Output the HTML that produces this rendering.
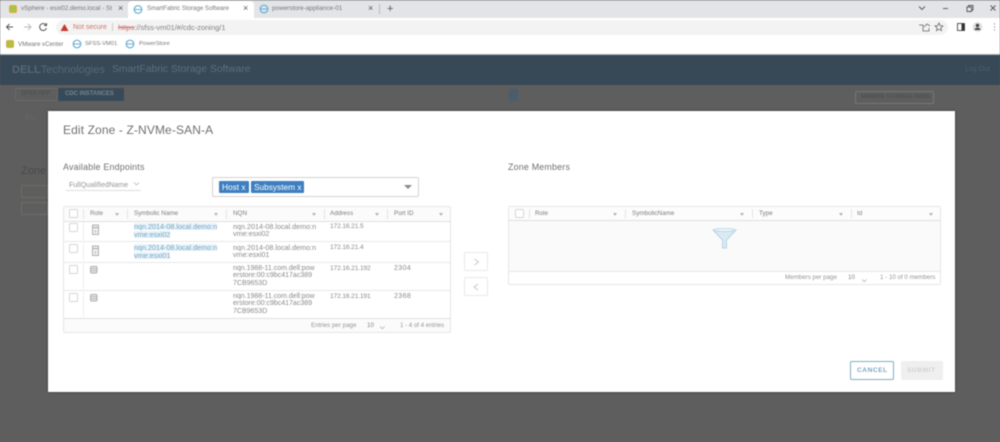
<!DOCTYPE html>
<html><head><meta charset="utf-8">
<style>
*{box-sizing:border-box}
html,body{margin:0;padding:0;width:1000px;height:442px;overflow:hidden;background:#5e5e5e;font-family:"Liberation Sans",sans-serif}
#w{position:relative;width:1000px;height:442px;overflow:hidden;background:#5e5e5e;filter:blur(.4px)}
.a{position:absolute}
.t{position:absolute;white-space:nowrap;color:#8a8a8a;font-size:7px;line-height:7.4px}
.h{position:absolute;white-space:nowrap;color:#7c7c7c;font-size:6.3px;line-height:8px;top:210px}
.cb{position:absolute;width:9px;height:9px;border:1px solid #d6d6d6;border-radius:1.5px;background:#fff}
.sep{position:absolute;width:1px;background:#e4e4e4}
.line{position:absolute;height:1px;background:#e8e8e8}
.flt{position:absolute;width:0;height:0;border-left:2.5px solid transparent;border-right:2.5px solid transparent;border-top:3px solid #b5b5b5;top:213px}
.lnk{position:absolute;white-space:nowrap;color:#6fa5c4;font-size:7.2px;line-height:7.4px;background:#eaf3f9}
.tag{position:absolute;top:181px;height:12px;background:#3d7fc0;color:#fff;font-size:8.3px;line-height:12px;padding-left:3px;border-radius:1px}
.ico{position:absolute}
</style></head><body><div id="w">
<!-- browser chrome -->
<div class="a" style="left:0;top:0;width:1000px;height:18px;background:#e3e4e7;border-top:1px solid #c6c7ca"></div>
<div class="a" style="left:128px;top:1px;width:126px;height:17px;background:#fff;border-radius:4px 4px 0 0"></div>
<div class="a" style="left:9px;top:5px;width:8px;height:8px;background:#a6c445;border:1.5px solid #e5a93d;border-radius:2px"></div>
<div class="t" style="left:21px;top:5px;font-size:6.3px;color:#777;width:91px;overflow:hidden">vSphere - esxi02.demo.local - Storage</div>
<div class="t" style="left:118px;top:5px;font-size:9px;color:#555">×</div>
<svg class="ico" style="left:133px;top:5px" width="10" height="9"><circle cx="5" cy="4.5" r="3.8" fill="#fff" stroke="#69aed2" stroke-width="1.2"/><path d="M1.5 4.5h7" stroke="#69aed2"/></svg>
<div class="t" style="left:147px;top:5px;font-size:6.1px;color:#777">SmartFabric Storage Software</div>
<div class="t" style="left:243px;top:5px;font-size:9px;color:#555">×</div>
<svg class="ico" style="left:259px;top:4px" width="10" height="10"><circle cx="5" cy="5" r="3.8" fill="#dbe6ee" stroke="#69aed2" stroke-width="1.2"/><path d="M1.5 5h7" stroke="#69aed2"/></svg>
<div class="t" style="left:272px;top:5px;font-size:6.4px;color:#777">powerstore-appliance-01</div>
<div class="t" style="left:368px;top:5px;font-size:9px;color:#555">×</div>
<div class="a" style="left:379px;top:4px;width:1px;height:10px;background:#bbb"></div>
<div class="t" style="left:387px;top:3px;font-size:11px;line-height:12px;color:#555">+</div>
<svg class="ico" style="left:915px;top:2px" width="85" height="14" fill="none" stroke="#555" stroke-width=".9"><path d="M4 4.500l3 3 3-3"/><path d="M28 6.500h5"/><path d="M52 5h4.500v4.500h-4.500zM53.500 5v-1.500h4.500v4.500h-1.500"/><path d="M75.500 3.500l5 5M80.500 3.500l-5 5"/></svg>
<div class="a" style="left:0;top:18px;width:1000px;height:17px;background:#fff"></div>
<div class="a" style="left:56px;top:20px;width:892px;height:15px;background:#f3f3f4;border-radius:7.5px"></div>
<svg class="ico" style="left:4px;top:20px" width="52" height="14" fill="none" stroke-width="1"><path d="M9 7H2.500M5.500 4L2.500 7l3 3" stroke="#555"/><path d="M20 7h7M24 4l3 3-3 3" stroke="#bbb"/><path d="M42 5a3.500 3.500 0 1 0 .5 3" stroke="#555"/><path d="M42.500 3v2.500H40" stroke="#555"/></svg>
<svg class="ico" style="left:60px;top:23px" width="9" height="9"><path d="M4.500 1L8.500 8H.5z" fill="#c5372c"/></svg>
<div class="t" style="left:73px;top:24px;font-size:7px;color:#c87a6a">Not secure</div>
<div class="a" style="left:112px;top:23px;width:1px;height:8px;background:#ccc"></div>
<div class="t" style="left:118px;top:24px;font-size:7.5px;color:#808080"><span style="color:#d07a70;text-decoration:line-through">https</span>://sfss-vm01/#/cdc-zoning/1</div>
<svg class="ico" style="left:914px;top:20px" width="86" height="14" fill="none" stroke="#666" stroke-width=".8"><path d="M5 5h4v6h6V8M10 7l3-3 3 2"/><path d="M25 3l1.200 2.600 2.800.3-2.100 1.900.6 2.800-2.500-1.400-2.500 1.400.6-2.800-2.100-1.900 2.800-.3z"/><rect x="43.500" y="3.500" width="7" height="7" stroke="#333"/><rect x="47.500" y="3.500" width="3" height="7" fill="#333" stroke="none"/><circle cx="63.500" cy="7" r="5" fill="#e0e1e3" stroke="none"/><circle cx="63.500" cy="5.500" r="1.700" fill="#444" stroke="none"/><path d="M60.500 10c0-3 6-3 6 0z" fill="#444" stroke="none"/><path d="M80.500 3.500v.8M80.500 6.500v.8M80.500 9.500v.8" stroke="#444" stroke-width="1"/></svg>
<div class="a" style="left:0;top:35px;width:1000px;height:19px;background:#fff"></div>
<div class="a" style="left:6px;top:40px;width:8px;height:8px;background:#a6c445;border:1.5px solid #e5a93d;border-radius:2px"></div>
<div class="t" style="left:18px;top:41px;font-size:6.1px;color:#777">VMware vCenter</div>
<svg class="ico" style="left:72px;top:39px" width="10" height="10"><circle cx="5" cy="5" r="3.800" fill="#fff" stroke="#69aed2" stroke-width="1.200"/><path d="M1.500 5h7" stroke="#69aed2"/></svg>
<div class="t" style="left:85px;top:41px;font-size:5.8px;color:#777">SFSS-VM01</div>
<svg class="ico" style="left:125px;top:39px" width="10" height="10"><circle cx="5" cy="5" r="3.800" fill="#fff" stroke="#69aed2" stroke-width="1.200"/><path d="M1.500 5h7" stroke="#69aed2"/></svg>
<div class="t" style="left:139px;top:41px;font-size:5.9px;color:#777">PowerStore</div>
<!-- dimmed app -->
<div class="a" style="left:0;top:54px;width:1000px;height:31px;background:#374856;border-top:1px solid #aab0b5"></div>
<div class="t" style="left:12px;top:64px;font-size:11px;line-height:12px;color:#586773;font-weight:bold">DELL<span style="font-weight:normal">Technologies</span></div>
<div class="t" style="left:112px;top:64px;font-size:10.3px;line-height:11px;color:#5f6e79">SmartFabric Storage Software</div>
<div class="t" style="left:965px;top:66px;font-size:7px;color:#4d5e6b">Log Out</div>
<div class="a" style="left:15px;top:88px;width:43px;height:13px;border:1px solid #6a6a6a;border-radius:2px"></div>
<div class="t" style="left:21px;top:91px;font-size:6px;color:#4a4a4a">SFSS APP</div>
<div class="a" style="left:58px;top:88px;width:66px;height:13px;background:#384a58"></div>
<div class="t" style="left:65px;top:91px;font-size:6px;font-weight:bold;color:#73828e">CDC INSTANCES</div>
<div class="a" style="left:509px;top:89px;width:9px;height:12px;background:#4c5d6a"></div>
<div class="a" style="left:855px;top:91px;width:79px;height:13px;border:1px solid #767676;border-radius:2px"></div>
<div class="t" style="left:861px;top:94px;font-size:5.500px;color:#4a4a4a">MANAGE STORAGE NODE</div>
<div class="t" style="left:25px;top:113px;font-size:8px;line-height:9px;color:#686868">En</div>
<div class="t" style="left:21px;top:165px;font-size:11px;line-height:13px;color:#4a4a4a">Zone</div>
<div class="a" style="left:21px;top:185px;width:27px;height:13px;border:1px solid #6c6c5a"></div>
<div class="a" style="left:21px;top:202px;width:27px;height:13px;border:1px solid #6c6c6c"></div>
<!-- modal -->
<div class="a" style="left:48px;top:111px;width:907px;height:281px;background:#fff;box-shadow:0 0 2px #333"></div>
<div class="t" style="left:63px;top:123px;font-size:12px;line-height:15px;color:#707070;letter-spacing:.12px">Edit Zone - Z-NVMe-SAN-A</div>
<div class="t" style="left:63px;top:162px;font-size:8.900px;line-height:10px;color:#707070;letter-spacing:.2px">Available Endpoints</div>
<div class="t" style="left:508px;top:162px;font-size:8.900px;line-height:10px;color:#707070;letter-spacing:.2px">Zone Members</div>
<div class="t" style="left:69px;top:181px;font-size:7.2px;line-height:8px;color:#959595">FullQualifiedName</div>
<svg class="ico" style="left:133px;top:181px" width="8" height="6" fill="none" stroke="#bbb" stroke-width=".8"><path d="M1 1.500l2.500 2.500 2.500-2.500"/></svg>
<div class="line" style="left:66px;top:190px;width:75px;background:#ddd"></div>
<div class="a" style="left:212px;top:177px;width:207px;height:20px;background:#fff;border:1px solid #d2d2d2;border-radius:2px"></div>
<div class="tag" style="left:219px;width:30px">Host x</div>
<div class="tag" style="left:251px;width:53px">Subsystem x</div>
<div class="a" style="left:404px;top:185px;width:0;height:0;border-left:4px solid transparent;border-right:4px solid transparent;border-top:4px solid #888"></div>

<!-- left table -->
<div class="a" style="left:63px;top:206px;width:388px;height:127px;border:1px solid #e6e6e6;border-radius:2px;background:#fff"></div>
<div class="a" style="left:64px;top:207px;width:386px;height:14px;background:#fbfbfb"></div>
<div class="a" style="left:64px;top:319px;width:386px;height:13px;background:#fbfbfb"></div>
<div class="line" style="left:63px;top:221px;width:388px;background:#e0e0e0"></div>
<div class="line" style="left:63px;top:241px;width:388px"></div>
<div class="line" style="left:63px;top:262px;width:388px"></div>
<div class="line" style="left:63px;top:290px;width:388px"></div>
<div class="line" style="left:63px;top:318px;width:388px;background:#e0e0e0"></div>
<div class="sep" style="left:83px;top:209px;height:10px"></div>
<div class="sep" style="left:127px;top:209px;height:10px"></div>
<div class="sep" style="left:226px;top:209px;height:10px"></div>
<div class="sep" style="left:324px;top:209px;height:10px"></div>
<div class="sep" style="left:387px;top:209px;height:10px"></div>
<div class="sep" style="left:83px;top:222px;height:18px;background:#eee"></div>
<div class="sep" style="left:83px;top:243px;height:18px;background:#eee"></div>
<div class="sep" style="left:83px;top:264px;height:25px;background:#eee"></div>
<div class="sep" style="left:83px;top:292px;height:25px;background:#eee"></div>
<div class="cb" style="left:69px;top:209px"></div>
<div class="cb" style="left:69px;top:223px"></div>
<div class="cb" style="left:69px;top:244px"></div>
<div class="cb" style="left:69px;top:265px"></div>
<div class="cb" style="left:69px;top:293px"></div>
<div class="h" style="left:90px">Role</div><div class="flt" style="left:115px"></div>
<div class="h" style="left:134px">Symbolic Name</div><div class="flt" style="left:214px"></div>
<div class="h" style="left:233px">NQN</div><div class="flt" style="left:312px"></div>
<div class="h" style="left:330px">Address</div><div class="flt" style="left:375px"></div>
<div class="h" style="left:394px">Port ID</div><div class="flt" style="left:439px"></div>
<svg class="ico" style="left:91px;top:224px" width="10" height="12" fill="none" stroke="#aaa" stroke-width=".9"><rect x="1.500" y="1" width="6" height="9.500" fill="#eee"/><path d="M1.500 3.500h6M4.500 6.500v2"/></svg>
<svg class="ico" style="left:91px;top:245px" width="10" height="12" fill="none" stroke="#aaa" stroke-width=".9"><rect x="1.500" y="1" width="6" height="9.500" fill="#eee"/><path d="M1.500 3.500h6M4.500 6.500v2"/></svg>
<svg class="ico" style="left:89px;top:265px" width="11" height="10" fill="none" stroke="#aaa" stroke-width=".9"><rect x="1.500" y="1.500" width="6.500" height="6.500" rx="1" fill="#eee"/><path d="M1.500 3.700h6.500M1.500 5.800h6.500"/></svg>
<svg class="ico" style="left:89px;top:293px" width="11" height="10" fill="none" stroke="#aaa" stroke-width=".9"><rect x="1.500" y="1.500" width="6.500" height="6.500" rx="1" fill="#eee"/><path d="M1.500 3.700h6.500M1.500 5.800h6.500"/></svg>
<div class="lnk" style="left:134px;top:223px">nqn.2014-08.local.demo:n</div>
<div class="lnk" style="left:134px;top:231px">vme:esxi02</div>
<div class="lnk" style="left:134px;top:244px">nqn.2014-08.local.demo:n</div>
<div class="lnk" style="left:134px;top:252px">vme:esxi01</div>
<div class="t" style="left:233px;top:223px;font-size:7.2px">nqn.2014-08.local.demo:n<br>vme:esxi02</div>
<div class="t" style="left:233px;top:244px;font-size:7.2px">nqn.2014-08.local.demo:n<br>vme:esxi01</div>
<div class="t" style="left:233px;top:265px">nqn.1988-11.com.dell:pow<br>erstore:00:c9bc417ac389<br>7CB9653D</div>
<div class="t" style="left:233px;top:293px">nqn.1988-11.com.dell:pow<br>erstore:00:c9bc417ac389<br>7CB9653D</div>
<div class="t" style="left:330px;top:223px;font-size:6.6px;letter-spacing:-.12px">172.16.21.5</div>
<div class="t" style="left:330px;top:244px;font-size:6.6px;letter-spacing:-.12px">172.16.21.4</div>
<div class="t" style="left:330px;top:265px;font-size:6.6px;letter-spacing:-.12px">172.16.21.192</div>
<div class="t" style="left:330px;top:293px;font-size:6.6px;letter-spacing:-.12px">172.16.21.191</div>
<div class="t" style="left:394px;top:265px;letter-spacing:.4px">2304</div>
<div class="t" style="left:394px;top:293px;letter-spacing:.4px">2368</div>
<div class="t" style="left:311px;top:322px;font-size:6.2px;color:#959595">Entries per page</div>
<div class="t" style="left:367px;top:322px;font-size:6.2px;color:#808080">10</div>
<svg class="ico" style="left:379px;top:326px" width="7" height="4" fill="none" stroke="#aaa" stroke-width=".7"><path d="M1 .5l2.300 2.300 2.300-2.300"/></svg>
<div class="t" style="left:400px;top:322px;font-size:6.1px;color:#959595">1 - 4 of 4 entries</div>

<!-- arrow buttons -->
<div class="a" style="left:464px;top:252px;width:24px;height:19px;border:1px solid #e8e8e8;border-radius:2px"></div>
<div class="a" style="left:464px;top:277px;width:24px;height:19px;border:1px solid #e8e8e8;border-radius:2px"></div>
<svg class="ico" style="left:464px;top:252px" width="24" height="44" fill="none" stroke="#c4c4c4" stroke-width=".9"><path d="M10.500 7l4 3-4 3"/><path d="M14 32l-4 3 4 3"/></svg>

<!-- right table -->
<div class="a" style="left:508px;top:206px;width:433px;height:79px;border:1px solid #e6e6e6;border-radius:2px;background:#fff"></div>
<div class="a" style="left:509px;top:207px;width:431px;height:13px;background:#fcfcfc"></div>
<div class="a" style="left:509px;top:221px;width:431px;height:50px;background:#fafafa"></div>
<div class="line" style="left:508px;top:220px;width:433px;background:#e0e0e0"></div>
<div class="line" style="left:508px;top:271px;width:433px"></div>
<div class="cb" style="left:515px;top:209px;width:8.500px;height:8.500px"></div>
<div class="sep" style="left:529px;top:209px;height:9px"></div>
<div class="sep" style="left:625px;top:209px;height:9px"></div>
<div class="sep" style="left:752px;top:209px;height:9px"></div>
<div class="sep" style="left:851px;top:209px;height:9px"></div>
<div class="h" style="left:535px">Role</div><div class="flt" style="left:613px"></div>
<div class="h" style="left:632px">SymbolicName</div><div class="flt" style="left:740px"></div>
<div class="h" style="left:759px">Type</div><div class="flt" style="left:839px"></div>
<div class="h" style="left:857px">Id</div><div class="flt" style="left:929px"></div>
<svg class="ico" style="left:711px;top:227px" width="28" height="24"><path d="M2 3h23L15.500 13v8h-4v-8z" fill="#dbeaf2" stroke="#b4d6e6" stroke-width="1"/><ellipse cx="13.500" cy="3" rx="11" ry="1.500" fill="#eef6fa" stroke="#b4d6e6" stroke-width=".8"/></svg>
<div class="t" style="left:785px;top:274px;font-size:6.2px;color:#959595">Members per page</div>
<div class="t" style="left:848px;top:274px;font-size:6.2px;color:#808080">10</div>
<svg class="ico" style="left:861px;top:279px" width="7" height="4" fill="none" stroke="#aaa" stroke-width=".7"><path d="M1 .5l2.300 2.300 2.300-2.300"/></svg>
<div class="t" style="left:880px;top:274px;font-size:6.2px;color:#959595">1 - 10 of 0 members</div>

<!-- footer buttons -->
<div class="a" style="left:850px;top:361px;width:44px;height:19px;border:1px solid #7eaec7;border-radius:2px;background:#fff"></div>
<div class="t" style="left:857px;top:367px;font-size:6.500px;font-weight:bold;color:#78a6be;letter-spacing:.6px">CANCEL</div>
<div class="a" style="left:901px;top:361px;width:42px;height:19px;background:#efefef;border-radius:2px"></div>
<div class="t" style="left:907px;top:367px;font-size:6.500px;font-weight:bold;color:#d2d2d2;letter-spacing:.6px">SUBMIT</div>
</div></body></html>
